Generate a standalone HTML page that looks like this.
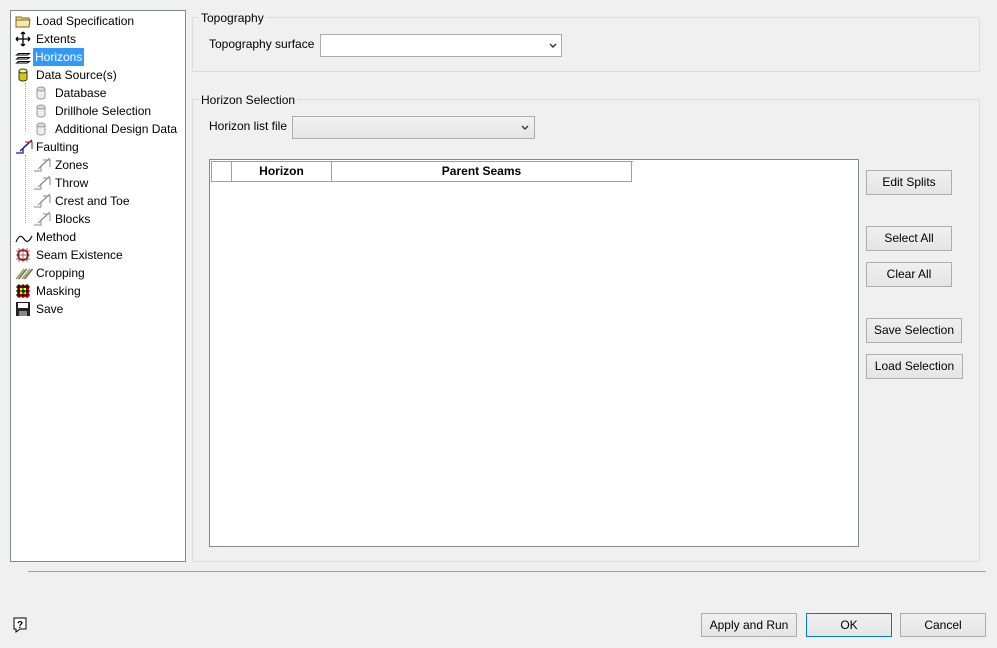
<!DOCTYPE html>
<html><head><meta charset="utf-8"><style>
*{box-sizing:border-box;margin:0;padding:0}
body{width:997px;height:648px;background:#f0f0f0;font-family:"Liberation Sans",sans-serif;font-size:12px;color:#000;position:relative;overflow:hidden}
.a{position:absolute}
.tree{left:10px;top:10px;width:176px;height:552px;background:#fff;border:1px solid #828790}
.it{position:absolute;height:18px;line-height:18px;white-space:nowrap}
.it svg{position:absolute;top:1px;left:0}
.it span{position:absolute;top:0;padding:0 2px}
.grp{border:1px solid #dcdcdc;border-radius:2px}
.lg{background:#f0f0f0;padding:0 2px;line-height:14px}
.btn{position:absolute;background:linear-gradient(#f0f0f0,#e5e5e5);border:1px solid #adadad;text-align:center;line-height:22px}
.dot{position:absolute;border-left:1px dotted #a0a0a0}
.hd{position:absolute;top:0;height:20px;border-right:1px solid #a0a0a0;border-bottom:1px solid #a0a0a0;background:#fff;font-weight:bold;text-align:center;line-height:19px}
</style></head><body>
<div class="a tree">
 <div class="dot" style="left:14px;top:72px;height:48px"></div>
 <div class="dot" style="left:14px;top:144px;height:68px"></div>
 <div class="it" style="left:4px;top:1px"><svg width="16" height="16"><path d="M1 4h5l1 1h7v9H1z" fill="#f5e08a" stroke="#7a6220"/><path d="M1 7h14l-1 7H1z" fill="#fbe9a5" stroke="#7a6220"/></svg><span style="left:19px">Load Specification</span></div>
 <div class="it" style="left:4px;top:19px"><svg width="16" height="16"><path d="M8 1v14M1 8h14M8 1l-2 2M8 1l2 2M8 15l-2-2M8 15l2-2M1 8l2-2M1 8l2 2M15 8l-2-2M15 8l-2 2" stroke="#000" stroke-width="1.3" fill="none"/></svg><span style="left:19px">Extents</span></div>
 <div class="it" style="left:4px;top:37px"><svg width="16" height="16"><path d="M3.5 4.5h11l-2 1.5h-11zM3.5 8.5h11l-2 1.5h-11zM3.5 12.5h11l-2 1.5h-11z" fill="#fff" stroke="#000" stroke-width="0.9"/></svg><span style="left:18px;background:#3399ff;color:#fff">Horizons</span></div>
 <div class="it" style="left:4px;top:55px"><svg width="16" height="16"><path d="M4 4v8a4 2 0 0 0 8 0V4" fill="#d8c800" stroke="#333"/><ellipse cx="8" cy="4" rx="4" ry="2" fill="#ff6" stroke="#333"/></svg><span style="left:19px">Data Source(s)</span></div>
 <div class="it" style="left:22px;top:73px"><svg width="16" height="16"><path d="M4 4v8a4 2 0 0 0 8 0V4" fill="#eee" stroke="#999"/><ellipse cx="8" cy="4" rx="4" ry="2" fill="#ddd" stroke="#999"/></svg><span style="left:20px">Database</span></div>
 <div class="it" style="left:22px;top:91px"><svg width="16" height="16"><path d="M4 4v8a4 2 0 0 0 8 0V4" fill="#eee" stroke="#999"/><ellipse cx="8" cy="4" rx="4" ry="2" fill="#ddd" stroke="#999"/></svg><span style="left:20px">Drillhole Selection</span></div>
 <div class="it" style="left:22px;top:109px"><svg width="16" height="16"><path d="M4 4v8a4 2 0 0 0 8 0V4" fill="#eee" stroke="#999"/><ellipse cx="8" cy="4" rx="4" ry="2" fill="#ddd" stroke="#999"/></svg><span style="left:20px">Additional Design Data</span></div>
 <div class="it" style="left:4px;top:127px"><svg width="18" height="16"><path d="M1 14h7V9M8 9L17 1M5 12l9-8" stroke="#1a1aa0" fill="none" stroke-width="1.3"/><path d="M10 3h7v7" stroke="#a01a1a" fill="none"/></svg><span style="left:19px">Faulting</span></div>
 <div class="it" style="left:22px;top:145px"><svg width="18" height="16"><path d="M1 14h7V9L17 1M5 12l9-8M10 3h7v7" stroke="#888" fill="none"/></svg><span style="left:20px">Zones</span></div>
 <div class="it" style="left:22px;top:163px"><svg width="18" height="16"><path d="M1 14h7V9L17 1M5 12l9-8M10 3h7v7" stroke="#888" fill="none"/></svg><span style="left:20px">Throw</span></div>
 <div class="it" style="left:22px;top:181px"><svg width="18" height="16"><path d="M1 14h7V9L17 1M5 12l9-8M10 3h7v7" stroke="#888" fill="none"/></svg><span style="left:20px">Crest and Toe</span></div>
 <div class="it" style="left:22px;top:199px"><svg width="18" height="16"><path d="M1 14h7V9L17 1M5 12l9-8M10 3h7v7" stroke="#888" fill="none"/></svg><span style="left:20px">Blocks</span></div>
 <div class="it" style="left:4px;top:217px"><svg width="18" height="16"><path d="M1 13C4 6 6 6 9 10s5 3 8-3" stroke="#000" fill="none" stroke-width="1.1"/></svg><span style="left:19px">Method</span></div>
 <div class="it" style="left:4px;top:235px"><svg width="16" height="16"><path d="M1 4h14M1 8h14M1 12h14M4 1v14M8 1v14M12 1v14" stroke="#777"/><circle cx="8" cy="8" r="5" fill="none" stroke="#a00" stroke-width="1.5"/></svg><span style="left:19px">Seam Existence</span></div>
 <div class="it" style="left:4px;top:253px"><svg width="18" height="16"><path d="M1 14L9 4M4 14L12 4M7 14L15 4M10 14L18 4" stroke="#7a3" stroke-width="1.3"/><path d="M3 14L11 4M9 14L17 4" stroke="#a3a"/></svg><span style="left:19px">Cropping</span></div>
 <div class="it" style="left:4px;top:271px"><svg width="16" height="16"><rect x="2" y="2" width="12" height="12" fill="#f00"/><rect x="5" y="5" width="6" height="6" fill="#ff0"/><rect x="7" y="7" width="3" height="3" fill="#0a0"/><path d="M1 4h14M1 8h14M1 12h14M4 1v14M8 1v14M12 1v14" stroke="#000"/></svg><span style="left:19px">Masking</span></div>
 <div class="it" style="left:4px;top:289px"><svg width="16" height="16"><rect x="1" y="1" width="14" height="14" fill="#222"/><rect x="3" y="2" width="10" height="5" fill="#fff"/><rect x="4" y="10" width="8" height="5" fill="#888"/></svg><span style="left:19px">Save</span></div>
</div>

<div class="a grp" style="left:192px;top:17px;width:788px;height:55px"></div>
<div class="a lg" style="left:199px;top:11px">Topography</div>
<div class="a" style="left:209px;top:37px">Topography surface</div>
<div class="a" style="left:320px;top:34px;width:242px;height:23px;background:#fff;border:1px solid #acacac"><svg class="a" style="right:4px;top:8px" width="8" height="6"><path d="M1 1l3 3 3-3" stroke="#333" fill="none" stroke-width="1.4"/></svg></div>

<div class="a grp" style="left:192px;top:99px;width:788px;height:463px"></div>
<div class="a lg" style="left:199px;top:93px">Horizon Selection</div>
<div class="a" style="left:209px;top:119px">Horizon list file</div>
<div class="a" style="left:292px;top:116px;width:243px;height:23px;background:linear-gradient(#f2f2f2,#e5e5e5);border:1px solid #adadad"><svg class="a" style="right:5px;top:8px" width="8" height="6"><path d="M1 1l3 3 3-3" stroke="#333" fill="none" stroke-width="1.4"/></svg></div>

<div class="a" style="left:209px;top:159px;width:650px;height:388px;background:#fff;border:1px solid #828790">
 <div class="a" style="left:1px;top:1px;width:422px;height:21px;border:1px solid #a0a0a0;border-right:none;border-bottom:none"></div>
 <div class="hd" style="left:2px;top:2px;width:20px"></div>
 <div class="hd" style="left:22px;top:2px;width:100px">Horizon</div>
 <div class="hd" style="left:122px;top:2px;width:300px">Parent Seams</div>
</div>

<div class="btn" style="left:866px;top:170px;width:86px;height:25px">Edit Splits</div>
<div class="btn" style="left:866px;top:226px;width:86px;height:25px">Select All</div>
<div class="btn" style="left:866px;top:262px;width:86px;height:25px">Clear All</div>
<div class="btn" style="left:866px;top:318px;width:96px;height:25px">Save Selection</div>
<div class="btn" style="left:866px;top:354px;width:97px;height:25px">Load Selection</div>

<div class="a" style="left:28px;top:571px;width:958px;height:1px;background:#a0a0a0"></div>

<svg class="a" style="left:12px;top:616px" width="16" height="17"><path d="M2 2h12v11H8l-4 3v-3H2z" fill="#fff" stroke="#000"/><text x="5" y="12" font-family="Liberation Sans" font-size="10" font-weight="bold">?</text></svg>

<div class="btn" style="left:701px;top:613px;width:96px;height:24px">Apply and Run</div>
<div class="btn" style="left:806px;top:613px;width:86px;height:24px;border-color:#0078d7">OK</div>
<div class="btn" style="left:900px;top:613px;width:86px;height:24px">Cancel</div>
</body></html>
